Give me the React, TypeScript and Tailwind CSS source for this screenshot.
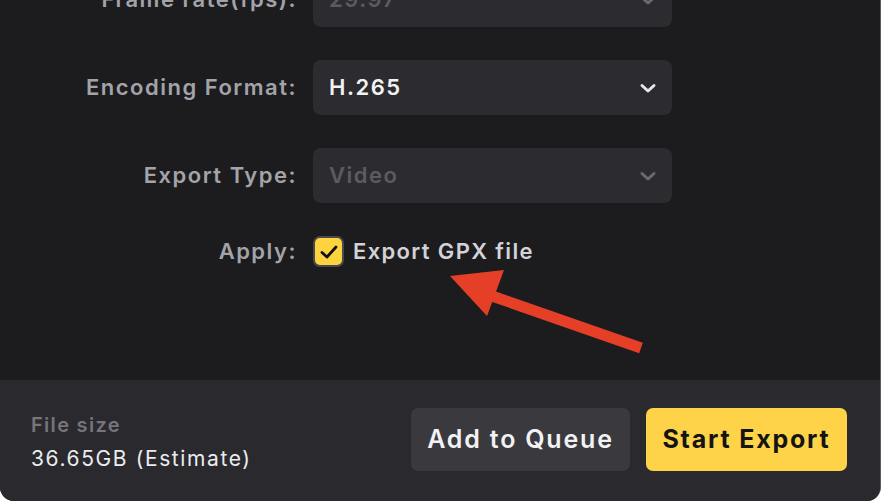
import React from "react";

function Chevron({ dim }: { dim?: boolean }) {
  return (
    <svg width="18" height="12" viewBox="0 0 18 12" className="shrink-0">
      <path
        d="M3 3.5 L9 9 L15 3.5"
        fill="none"
        stroke={dim ? "#6a6a70" : "#e6e6ea"}
        strokeWidth="3"
        strokeLinecap="round"
        strokeLinejoin="round"
      />
    </svg>
  );
}

function Row({
  label,
  value,
  dim,
}: {
  label: string;
  value: string;
  dim?: boolean;
}) {
  return (
    <div className="flex items-center h-[55px]">
      <div className="w-[313px] pr-[16px] text-right text-[22px] font-semibold text-[#a3a3aa] tracking-[1.5px] whitespace-nowrap">
        {label}
      </div>
      <div className="w-[359px] h-[55px] rounded-[8px] bg-[#2c2c30] flex items-center justify-between pl-[16px] pr-[15px]">
        <span
          className={
            "text-[22px] font-semibold tracking-[1.5px] " +
            (dim ? "text-[#5b5b61]" : "text-[#f2f2f4]")
          }
        >
          {value}
        </span>
        <Chevron dim={dim} />
      </div>
    </div>
  );
}

export default function App() {
  return (
    <div
      className="w-[882px] h-[501px] bg-white overflow-hidden"
      style={{ fontFamily: "Inter, 'Noto Sans', sans-serif" }}
    >
      <div className="relative w-[881px] h-[501px] bg-[#1c1c1e] rounded-b-[14px] border-r-[1px] border-r-[#5c5c60] overflow-hidden flex flex-col">
        <div className="flex-1 flex flex-col gap-[33px] mt-[-28px]">
          <Row label="Frame rate(fps):" value="29.97" dim />
          <Row label="Encoding Format:" value="H.265" />
          <Row label="Export Type:" value="Video" dim />
          <div className="flex items-center h-[31px]">
            <div className="w-[313px] pr-[16px] text-right text-[22px] font-semibold text-[#a3a3aa] tracking-[1.5px]">
              Apply:
            </div>
            <div className="w-[31px] h-[31px] rounded-[7px] bg-[#fdd33f] border-[2px] border-[#4a4a4c] flex items-center justify-center">
              <svg width="20" height="16" viewBox="0 0 20 16">
                <path
                  d="M3 8.5 L8 13 L17 3"
                  fill="none"
                  stroke="#111"
                  strokeWidth="2.8"
                  strokeLinecap="round"
                  strokeLinejoin="round"
                />
              </svg>
            </div>
            <span className="ml-[9px] text-[22px] font-semibold text-[#d2d2d8] tracking-[1.35px]">
              Export GPX file
            </span>
          </div>
        </div>
        <div className="h-[121px] bg-[#2a2a2e] flex items-center justify-between pl-[31px] pr-[33px]">
          <div className="flex flex-col gap-[10px] pt-[3px]">
            <span className="text-[20px] font-semibold text-[#75757b] leading-[24px] tracking-[1.3px]">
              File size
            </span>
            <span className="text-[21px] font-normal text-[#ececef] leading-[24px] tracking-[1.6px]">
              36.65GB (Estimate)
            </span>
          </div>
          <div className="flex items-center gap-[16px] -mt-[2px]">
            <div className="w-[219px] h-[63px] rounded-[7px] bg-[#3a3a3e] flex items-center justify-center text-[25px] font-semibold text-[#f2f2f4] tracking-[1.8px]">
              Add to Queue
            </div>
            <div className="w-[201px] h-[63px] rounded-[7px] bg-[#fed348] flex items-center justify-center text-[25px] font-bold text-[#141414] tracking-[1.8px]">
              Start Export
            </div>
          </div>
        </div>
        <svg
          className="absolute left-0 top-0 pointer-events-none"
          width="882"
          height="501"
          viewBox="0 0 882 501"
        >
          <line
            x1="492"
            y1="296"
            x2="641"
            y2="348"
            stroke="#e63f27"
            strokeWidth="11"
          />
          <polygon points="450,276 504,270 487,316" fill="#e63f27" />
        </svg>
      </div>
    </div>
  );
}
